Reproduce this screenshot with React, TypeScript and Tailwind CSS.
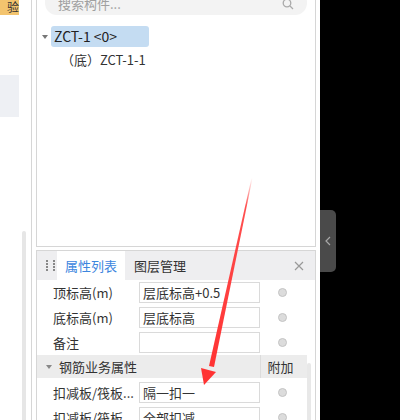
import React from "react";

const FONT = { fontFamily: '"Noto Sans CJK SC", "Noto Sans", sans-serif' };

type Row = { label: string; value: string };

const TOP_ROWS: Row[] = [
  { label: "顶标高(m)", value: "层底标高+0.5" },
  { label: "底标高(m)", value: "层底标高" },
  { label: "备注", value: "" },
];

const REBAR_ROWS: Row[] = [
  { label: "扣减板/筏板...", value: "隔一扣一" },
  { label: "扣减板/筏板", value: "全部扣减" },
];

function Dot() {
  return <span className="block h-[9px] w-[9px] rounded-full border border-[#c4c4c4] bg-[#dcdcdc]" />;
}

function PropRow({ label, value }: Row) {
  return (
    <div className="flex h-[25px] shrink-0 items-center">
      <div className="w-[102px] truncate pl-[16px] text-[13px] text-[#333]">{label}</div>
      <div className="flex h-[21px] w-[121px] items-center border border-[#dadada] bg-white px-[3px] text-[13px] text-[#333]">
        {value}
      </div>
      <div className="flex w-[44px] justify-center">
        <Dot />
      </div>
    </div>
  );
}

export default function App() {
  return (
    <div className="relative flex h-[420px] w-[400px] overflow-hidden bg-white" style={FONT}>
      {/* left strip */}
      <div className="flex w-[19px] shrink-0 flex-col">
        <div className="flex h-[15px] items-start justify-end overflow-hidden bg-[#f3c46e] text-[12px] leading-[14px] text-[#333]">
          验
        </div>
        <div className="mt-[60px] h-[42px] bg-[#eef0f4]" />
      </div>

      {/* gutter with scrollbar */}
      <div className="flex w-[12px] shrink-0 justify-center pt-[231px]">
        <div className="ml-[-3px] w-[4px] rounded-t-[2px] bg-[#e6e6e6]" />
      </div>
      <div className="w-[1px] shrink-0 bg-[#d6d6d6]" />
      <div className="w-[4px] shrink-0" />

      {/* main panel */}
      <div className="flex w-[280px] shrink-0 flex-col">
        {/* tree */}
        <div className="flex h-[247px] shrink-0 flex-col border-x border-b border-[#d6d6d6]">
          <div className="mx-[8px] mt-[-10px] flex h-[25px] items-center justify-between rounded-[12px] bg-[#f3f3f3] px-[13px] pt-[2px]">
            <span className="text-[13px] text-[#a0a0a0]">搜索构件...</span>
            <svg width="12" height="12" viewBox="0 0 12 12" fill="none" stroke="#aaa" strokeWidth="1.3">
              <circle cx="5" cy="5" r="3.8" />
              <path d="M8 8l3 3" />
            </svg>
          </div>
          <div className="mt-[11px] flex items-center pl-[5px]">
            <span className="mr-[3px] h-0 w-0 border-x-[3px] border-t-[4px] border-x-transparent border-t-[#777]" />
            <span className="flex h-[21px] w-[98px] items-center rounded-[3px] bg-[#c4dcf2] pl-[3px] text-[14px] text-[#222]">
              ZCT-1 &lt;0&gt;
            </span>
          </div>
          <div className="mt-[2px] pl-[24px] text-[13px] leading-[22px] text-[#333]">（底）ZCT-1-1</div>
        </div>

        {/* properties */}
        <div className="mt-[3px] flex min-h-0 flex-1 flex-col overflow-hidden border-x border-t border-[#d6d6d6]">
          <div className="flex h-[29px] shrink-0 items-stretch bg-[#eeeef0]">
            <div className="grid w-[20px] grid-cols-2 content-center justify-center gap-x-[2px] gap-y-[1px] pl-[9px]">
              {Array.from({ length: 8 }).map((_, i) => (
                <span key={i} className="h-[2px] w-[2px] bg-[#888]" />
              ))}
            </div>
            <div className="flex w-[68px] items-center justify-center bg-white text-[13px] text-[#3c86de]">属性列表</div>
            <div className="flex items-center pl-[9px] text-[13px] text-[#333]">图层管理</div>
            <div className="ml-auto flex items-center pr-[11px]">
              <svg width="10" height="10" viewBox="0 0 10 10" stroke="#999" strokeWidth="1.2">
                <path d="M1 1l8 8M9 1l-8 8" />
              </svg>
            </div>
          </div>

          <div className="flex">
            <div className="flex w-[270px] shrink-0 flex-col">
              {TOP_ROWS.map((r) => (
                <PropRow key={r.label} {...r} />
              ))}
              <div className="flex h-[23px] shrink-0 items-center bg-[#ececec] pr-[7px]">
                <span className="ml-[9px] mr-[7px] h-0 w-0 border-x-[3px] border-t-[4px] border-x-transparent border-t-[#888]" />
                <span className="flex-1 text-[13px] text-[#333]">钢筋业务属性</span>
                <span className="flex h-full w-[40px] items-center justify-center border-l border-[#dcdcdc] text-[13px] text-[#333]">
                  附加
                </span>
              </div>
              <div className="h-[2px]" />
              {REBAR_ROWS.map((r) => (
                <PropRow key={r.label} {...r} />
              ))}
            </div>
            <div className="mt-[83px] h-[80px] w-[4px] shrink-0 rounded-t-[2px] bg-[#e8e8e8]" />
          </div>
        </div>
      </div>

      <div className="w-[4px] shrink-0" />

      {/* dark side */}
      <div className="flex flex-1 flex-col bg-black">
        <div className="mt-[210px] flex h-[62px] w-[16px] items-center justify-center rounded-r-[5px] bg-[#4a4a4a]">
          <svg width="6" height="10" viewBox="0 0 6 10" fill="none" stroke="#a8a8a8" strokeWidth="1.2">
            <path d="M5 1L1 5l4 4" />
          </svg>
        </div>
      </div>

      {/* annotation arrow */}
      <svg className="pointer-events-none absolute left-0 top-0" width="400" height="420" viewBox="0 0 400 420">
        <defs>
          <linearGradient id="fade" x1="252" y1="178" x2="212" y2="366" gradientUnits="userSpaceOnUse">
            <stop offset="0" stopColor="#ff3b3b" stopOpacity="0" />
            <stop offset="0.15" stopColor="#ff3b3b" stopOpacity="0.9" />
            <stop offset="1" stopColor="#ff3333" />
          </linearGradient>
        </defs>
        <polygon points="252.5,178 251.5,178 209,366 214,367" fill="url(#fade)" />
        <polygon points="201,368 216,372 204,385" fill="#ff3333" />
      </svg>
    </div>
  );
}
